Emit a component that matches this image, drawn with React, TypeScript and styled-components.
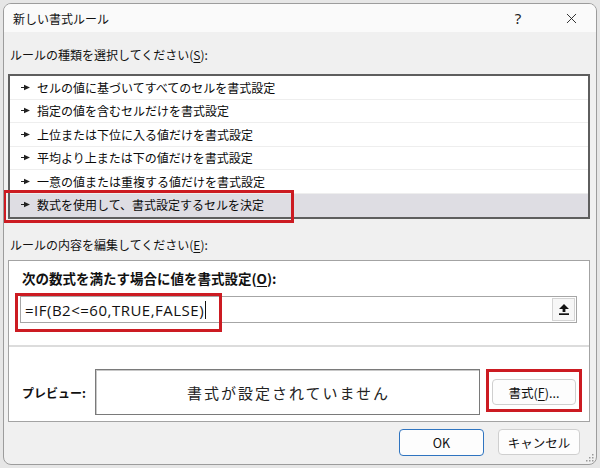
import React from "react";
import styled, { createGlobalStyle } from "styled-components";
import { X } from "lucide-react";

const GlobalStyle = createGlobalStyle`
    html, body {
        margin: 0;
        padding: 0;
        background: #e6e6e6;
    }
    body {
        font-family: "Noto Sans CJK JP", "Noto Sans", sans-serif;
        color: #111;
    }
`;

const Tela = styled.div`
    width: 600px;
    height: 468px;
    padding: 3px;
    box-sizing: border-box;
`;

const Janela = styled.div`
    position: relative;
    width: 100%;
    height: 100%;
    box-sizing: border-box;
    display: flex;
    flex-direction: column;
    background: #f0f0f0;
    border: 1px solid #9c9c9c;
    border-radius: 8px;
    overflow: hidden;
`;

const BarraTitulo = styled.div`
    height: 28px;
    display: flex;
    align-items: center;
    padding: 0 13px 0 9px;
    background: #fafafa;
    font-size: 12px;
`;

const BotoesTitulo = styled.div`
    margin-left: auto;
    display: flex;
    align-items: center;
    gap: 29px;
`;

const BotaoTitulo = styled.span`
    width: 24px;
    height: 24px;
    display: flex;
    align-items: center;
    justify-content: center;
    font-family: "Noto Sans", sans-serif;
    font-size: 15px;
    color: #222;
`;

const Corpo = styled.div`
    flex: 1;
    display: flex;
    flex-direction: column;
    padding: 0 6px 0 4px;
`;

const Rotulo = styled.div<{ $topo: number }>`
    font-size: 12px;
    line-height: 16px;
    margin: ${(p) => p.$topo}px 0 0 2px;
`;

const Sublinhado = styled.span`
    text-decoration: underline;
    text-underline-offset: 2px;
`;

const Lista = styled.div`
    margin-top: 11px;
    height: 145px;
    box-sizing: border-box;
    border: 2px solid #5e5e5e;
    background: #fff;
    display: flex;
    flex-direction: column;
`;

const Item = styled.div<{ $selecionado?: boolean }>`
    position: relative;
    height: 23.5px;
    flex-shrink: 0;
    box-sizing: border-box;
    display: flex;
    align-items: center;
    gap: 7px;
    padding-left: 11px;
    font-size: 12px;
    color: #0a0a0a;
    background: ${(p) => (p.$selecionado ? "#dedde3" : "#fff")};
    border-bottom: 1px solid ${(p) => (p.$selecionado ? "#dedde3" : "#eeeeee")};
`;

/* moldura vermelha que marca o item ou campo em foco */
const Destaque = styled.span<{ $x: number; $y: number; $w: number; $h: number }>`
    position: absolute;
    left: ${(p) => p.$x}px;
    top: ${(p) => p.$y}px;
    width: ${(p) => p.$w}px;
    height: ${(p) => p.$h}px;
    box-sizing: border-box;
    border: 3px solid #cc1b22;
    pointer-events: none;
`;

const Painel = styled.div`
    margin-top: 7px;
    height: 162px;
    box-sizing: border-box;
    border: 1px solid #a3a3a3;
    background: #fff;
    display: flex;
    flex-direction: column;
`;

const TituloPainel = styled.div`
    margin: 8px 0 0 13px;
    font-size: 13.5px;
    line-height: 18px;
    font-weight: 700;
`;

const Campo = styled.div`
    position: relative;
    margin: 9px 12px 0 11px;
    height: 27px;
    box-sizing: border-box;
    border: 1px solid #a6a6a6;
    display: flex;
    align-items: center;
    padding-left: 4px;
`;

const Formula = styled.span`
    font-family: "Open Sans", "Noto Sans", sans-serif;
    font-size: 15px;
    letter-spacing: 0.5px;
`;

const Cursor = styled.span`
    width: 1px;
    height: 18px;
    margin-left: 1px;
    background: #111;
`;

const BotaoRecolher = styled.span`
    margin-left: auto;
    margin-right: 1px;
    width: 23px;
    height: 23px;
    box-sizing: border-box;
    border: 1px solid #d4d4d4;
    background: #f7f7f7;
    display: flex;
    align-items: center;
    justify-content: center;
`;

const Divisor = styled.div`
    margin-top: 22px;
    height: 2px;
    background: #dcdcdc;
`;

const LinhaPrevia = styled.div`
    margin: 22px 13px 0 13px;
    display: flex;
    align-items: center;
`;

const RotuloPrevia = styled.span`
    width: 73px;
    font-size: 12px;
    font-weight: 700;
`;

const CaixaPrevia = styled.div`
    width: 385px;
    height: 46px;
    box-sizing: border-box;
    border: 1px solid #7a7a7a;
    box-shadow: inset 1px 1px 0 #c8c8c8;
    display: flex;
    align-items: center;
    justify-content: center;
    padding-left: 2px;
    font-size: 15px;
    letter-spacing: 2px;
    color: #222;
`;

const Botao = styled.button<{ $largura: number; $principal?: boolean }>`
    position: relative;
    width: ${(p) => p.$largura}px;
    height: ${(p) => (p.$principal ? 27 : 26)}px;
    box-sizing: border-box;
    border: 1px solid ${(p) => (p.$principal ? "#2f74c0" : "#cfcfcf")};
    border-radius: 4px;
    background: #fdfdfd;
    font-family: "Noto Sans CJK JP", "Noto Sans", sans-serif;
    font-size: 12.5px;
    color: #111;
    padding: 0;
    display: flex;
    align-items: center;
    justify-content: center;
`;

const BotaoFormato = styled(Botao)`
    margin-left: 12px;
`;

const Rodape = styled.div`
    margin-top: 7px;
    display: flex;
    justify-content: flex-end;
    gap: 14px;
    padding-right: 10px;
`;

const Alca = styled.svg`
    position: absolute;
    right: 2px;
    bottom: 2px;
`;

const regras = [
    "セルの値に基づいてすべてのセルを書式設定",
    "指定の値を含むセルだけを書式設定",
    "上位または下位に入る値だけを書式設定",
    "平均より上または下の値だけを書式設定",
    "一意の値または重複する値だけを書式設定",
    "数式を使用して、書式設定するセルを決定",
];

function Seta() {
    return (
        <svg width="9" height="7" viewBox="0 0 9 7">
            <polygon points="0,3 3,3 3,0.8 9,3.5 3,6.2 3,4 0,4" fill="#222" />
        </svg>
    );
}

function IconeRecolher() {
    return (
        <svg width="12" height="13" viewBox="0 0 12 13">
            <polygon points="6,1 11,6 7.4,6 7.4,9 4.6,9 4.6,6 1,6" fill="#111" />
            <rect x="1" y="10.3" width="10" height="1.7" fill="#111" />
        </svg>
    );
}

export default function App() {
    return (
        <>
            <GlobalStyle />
            <Tela>
                <Janela>
                    <BarraTitulo>
                        新しい書式ルール
                        <BotoesTitulo>
                            <BotaoTitulo>?</BotaoTitulo>
                            <BotaoTitulo>
                                <X size={17} strokeWidth={1.3} />
                            </BotaoTitulo>
                        </BotoesTitulo>
                    </BarraTitulo>
                    <Corpo>
                        <Rotulo $topo={15}>
                            ルールの種類を選択してください(<Sublinhado>S</Sublinhado>):
                        </Rotulo>
                        <Lista>
                            {regras.map((regra, i) => {
                                const ultimo = i === regras.length - 1;
                                return (
                                    <Item key={regra} $selecionado={ultimo}>
                                        <Seta />
                                        {regra}
                                        {ultimo && <Destaque $x={-7} $y={-4} $w={291} $h={33} />}
                                    </Item>
                                );
                            })}
                        </Lista>
                        <Rotulo $topo={18}>
                            ルールの内容を編集してください(<Sublinhado>E</Sublinhado>):
                        </Rotulo>
                        <Painel>
                            <TituloPainel>
                                次の数式を満たす場合に値を書式設定(<Sublinhado>O</Sublinhado>):
                            </TituloPainel>
                            <Campo>
                                <Formula>=IF(B2&lt;=60,TRUE,FALSE)</Formula>
                                <Cursor />
                                <BotaoRecolher>
                                    <IconeRecolher />
                                </BotaoRecolher>
                                <Destaque $x={-6} $y={-4} $w={207} $h={39} />
                            </Campo>
                            <Divisor />
                            <LinhaPrevia>
                                <RotuloPrevia>プレビュー:</RotuloPrevia>
                                <CaixaPrevia>書式が設定されていません</CaixaPrevia>
                                <BotaoFormato $largura={84}>
                                    書式(<Sublinhado>F</Sublinhado>)...
                                    <Destaque $x={-7} $y={-11} $w={96} $h={43} />
                                </BotaoFormato>
                            </LinhaPrevia>
                        </Painel>
                        <Rodape>
                            <Botao $largura={85} $principal>
                                OK
                            </Botao>
                            <Botao $largura={82}>キャンセル</Botao>
                        </Rodape>
                    </Corpo>
                    <Alca width="10" height="10" viewBox="0 0 10 10">
                        {[
                            [8, 2],
                            [5, 5],
                            [8, 5],
                            [2, 8],
                            [5, 8],
                            [8, 8],
                        ].map(([x, y]) => (
                            <rect key={`${x}-${y}`} x={x} y={y} width="1.5" height="1.5" fill="#9a9a9a" />
                        ))}
                    </Alca>
                </Janela>
            </Tela>
        </>
    );
}
